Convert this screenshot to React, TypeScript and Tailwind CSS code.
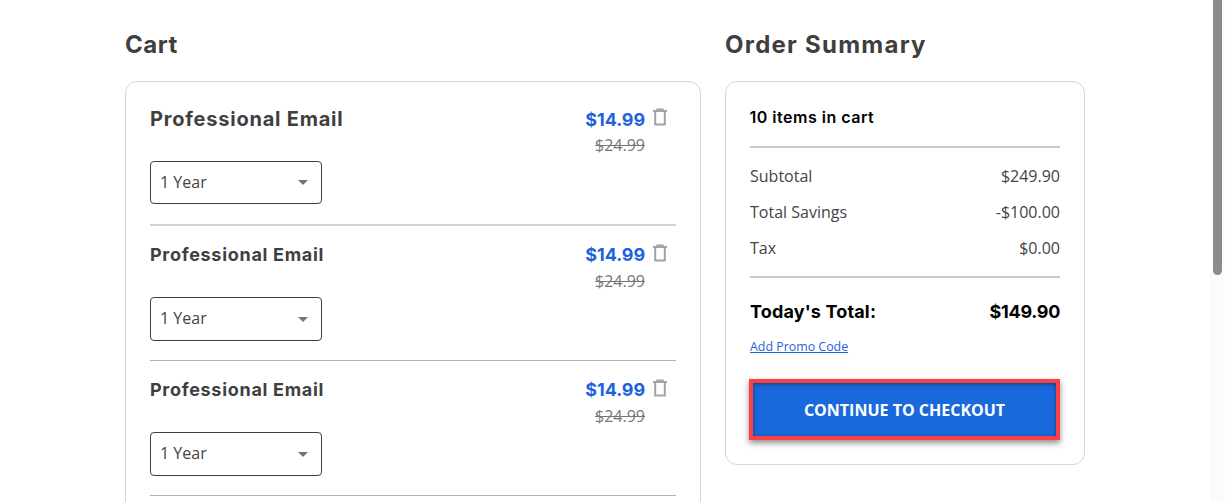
const heading = "font-['Inter','Liberation_Sans',sans-serif]";
const body = "font-['Open_Sans','Liberation_Sans',sans-serif]";

function TrashIcon() {
  return (
    <svg width="16" height="18" viewBox="0 0 16 18" fill="none" stroke="#a3a3a3" strokeWidth="2" className="mt-[1px]">
      <path d="M1 3h14" />
      <path d="M5 3V1.2h6V3" strokeWidth="1.5" />
      <path d="M3.2 3v13.6h9.6V3" />
    </svg>
  );
}

function CartRow({ large, divider }: { large?: boolean; divider: string }) {
  return (
    <div className={`${divider} ${large ? 'h-[144px] border-b-2 pt-[24px]' : 'h-[135px] border-b pt-[15px]'}`}>
      <div className="flex items-start justify-between">
        <h2 className={`${heading} font-bold text-[#3f3f3f] ${large ? 'text-[20px] leading-[27px] tracking-[0.78px]' : 'text-[18px] leading-[27px] tracking-[0.7px]'}`}>
          Professional Email
        </h2>
        <div className="flex items-start gap-[7px] pr-[8px]">
          <div className="flex flex-col items-end">
            <span className={`${heading} text-[18px] font-bold leading-[27px] tracking-[-0.1px] text-[#1f63dc]`}>$14.99</span>
            <span className={`${body} ${large ? '' : 'mt-[1px]'} text-[16px] leading-[24px] text-[#777777] line-through`}>$24.99</span>
          </div>
          <div className={large ? 'pt-[1px]' : 'pt-[2px]'}>
            <TrashIcon />
          </div>
        </div>
      </div>
      <div className={`${large ? 'h-[43px]' : 'h-[44px]'} mt-[4px] flex w-[172px] items-center justify-between rounded-[4px] border border-[#3f3f3f] pl-[9px] pr-[13px]`}>
        <span className={`${body} pb-[2px] text-[16px] text-[#444444]`}>1 Year</span>
        <span className="h-0 w-0 border-x-[5px] border-t-[5px] border-x-transparent border-t-[#757575]" />
      </div>
    </div>
  );
}

function SummaryLine({ label, value }: { label: string; value: string }) {
  return (
    <div className={`${body} flex h-[36px] items-center justify-between text-[16px] text-[#444444]`}>
      <span>{label}</span>
      <span>{value}</span>
    </div>
  );
}

export default function App() {
  return (
    <div className="flex h-[502px] overflow-hidden bg-white">
      <main className="flex-1 pl-[125px] pt-[27px]">
        <div className="flex gap-[24px]">
          <section className="w-[576px]">
            <h1 className={`${heading} text-[24px] font-bold leading-[36px] tracking-[0.5px] text-[#3f3f3f]`}>Cart</h1>
            <div className="mt-[18px] h-[600px] rounded-t-[12px] border border-[#d3d4e2] px-[24px]">
              <CartRow large divider="border-[#d0d1df]" />
              <CartRow divider="border-[#b3b3b3]" />
              <CartRow divider="border-[#b3b3b3]" />
            </div>
          </section>
          <section className="w-[360px]">
            <h1 className={`${heading} text-[24px] font-bold leading-[36px] tracking-[1.25px] text-[#3f3f3f]`}>Order Summary</h1>
            <div className="mt-[18px] h-[384px] rounded-[12px] border border-[#d3d4e2] px-[24px] pt-[23px]">
              <p className={`${heading} -ml-[0.5px] text-[16px] font-semibold leading-[24px] tracking-[0.5px] text-black`}>10 items in cart</p>
              <div className="mt-[17px] border-t-2 border-[#c8c8c8] pt-[10px]">
                <SummaryLine label="Subtotal" value="$249.90" />
                <SummaryLine label="Total Savings" value="-$100.00" />
                <SummaryLine label="Tax" value="$0.00" />
              </div>
              <div className="mt-[10px] border-t-2 border-[#c8c8c8] pt-[20px]">
                <div className={`${heading} flex items-center justify-between text-[18px] font-bold leading-[27px] text-black`}>
                  <span className="tracking-[0.15px]">Today's Total:</span>
                  <span className="tracking-[-0.3px]">$149.90</span>
                </div>
              </div>
              <a href="#" className={`${body} mt-[13px] block text-[12.4px] leading-[18px] text-[#1f63dc] underline`}>
                Add Promo Code
              </a>
              <button className={`${body} -ml-[1px] mt-[23px] h-[61px] w-[311px] border-[4px] border-[#fb4048] bg-[#1a69dc] text-[16px] font-bold text-white shadow-[0_3px_6px_rgba(0,0,0,0.45),inset_0_1px_4px_rgba(0,0,0,0.45)]`}>
                CONTINUE TO CHECKOUT
              </button>
            </div>
          </section>
        </div>
      </main>
      <aside className="w-[15px] bg-[#fbfbfb] pl-[3px]">
        <div className="h-[275px] w-[9px] rounded-b-[5px] bg-[#8b8b8b]" />
      </aside>
    </div>
  );
}
